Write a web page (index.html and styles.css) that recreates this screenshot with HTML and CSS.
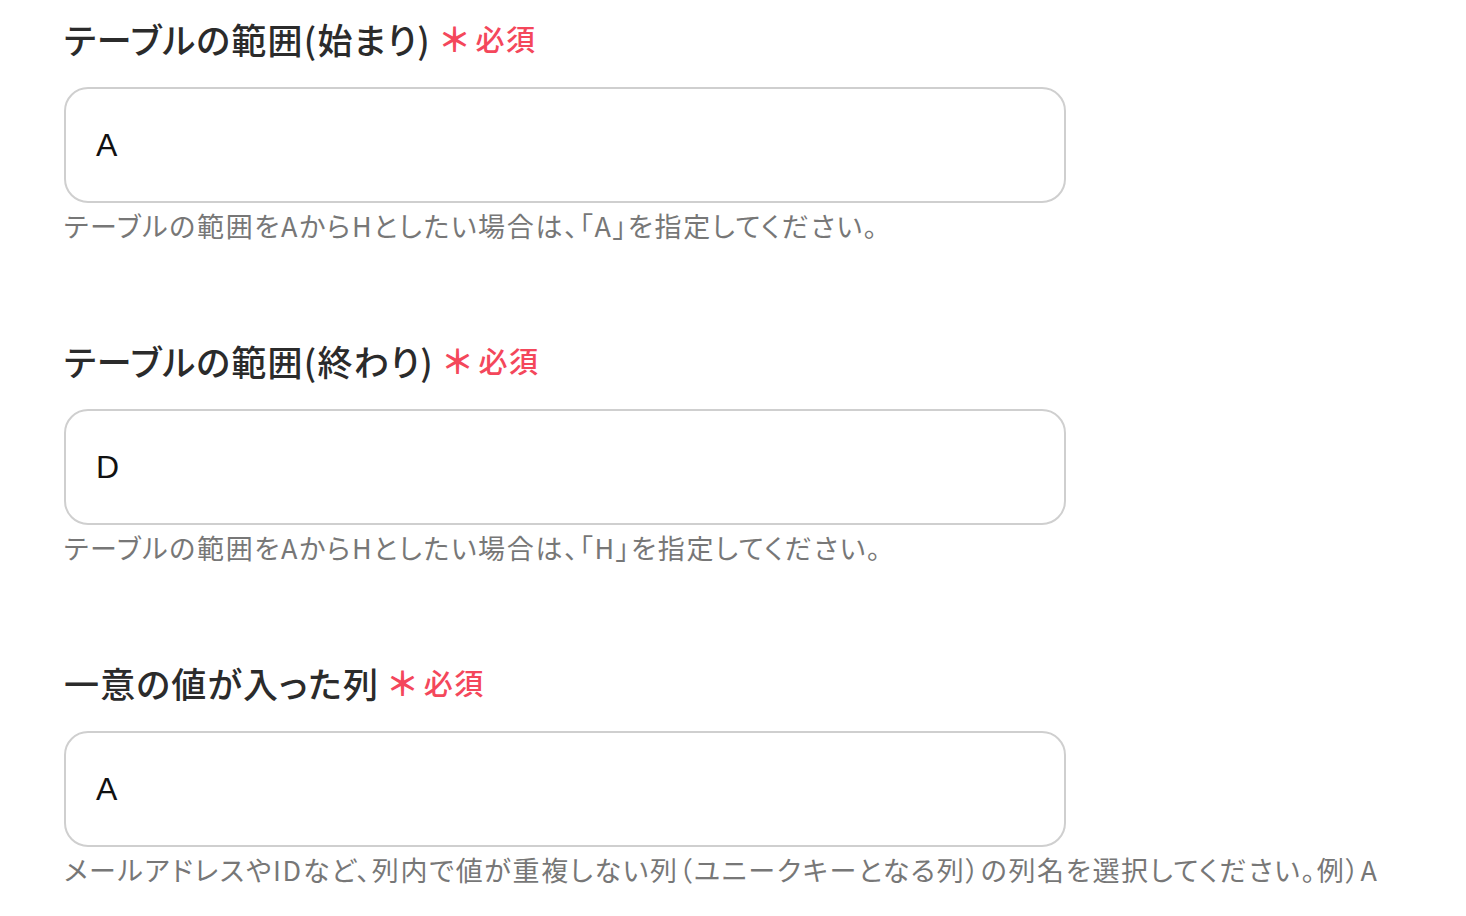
FILE: index.html
```html
<!DOCTYPE html>
<html lang="ja">
<head>
<meta charset="utf-8">
<link rel="stylesheet" href="styles.css">
</head>
<body>
<div class="form">
  <div class="field">
    <div class="label"><span class="label-text">テーブルの範囲(始まり)</span><span class="req"><span class="star">＊</span>必須</span></div>
    <div class="input">A</div>
    <div class="help">テーブルの範囲をAからHとしたい場合は、「A」を指定してください。</div>
  </div>
  <div class="field">
    <div class="label"><span class="label-text">テーブルの範囲(終わり)</span><span class="req"><span class="star">＊</span>必須</span></div>
    <div class="input">D</div>
    <div class="help">テーブルの範囲をAからHとしたい場合は、「H」を指定してください。</div>
  </div>
  <div class="field">
    <div class="label"><span class="label-text">一意の値が入った列</span><span class="req"><span class="star">＊</span>必須</span></div>
    <div class="input">A</div>
    <div class="help">メールアドレスやIDなど、列内で値が重複しない列（ユニークキーとなる列）の列名を選択してください。例）A</div>
  </div>
</div>
</body>
</html>
```
FILE: styles.css
```css
html, body {
  margin: 0;
  padding: 0;
  background: #fff;
}
body {
  font-family: "Noto Sans CJK JP", "Noto Sans", sans-serif;
  color: #333;
}
.form {
  padding: 13px 0 0 64px;
  width: 1002px;
  display: flex;
  flex-direction: column;
  gap: 91px;
}
.field {
  display: flex;
  flex-direction: column;
}
.label {
  display: flex;
  align-items: center;
  height: 50px;
  font-size: 35px;
  font-weight: 500;
  color: #2b2b2b;
  font-feature-settings: "palt";
  letter-spacing: 1.2px;
}
.req {
  margin-left: 10px;
  color: #f4475b;
  font-size: 29px;
  font-weight: 500;
  letter-spacing: 1.5px;
  display: flex;
  align-items: center;
}
.star {
  font-weight: 700;
  font-size: 33px;
  margin-right: 6px;
}
.input {
  margin-top: 24px;
  box-sizing: border-box;
  height: 116px;
  border: 2px solid #cfcfcf;
  border-radius: 24px;
  padding: 0 30px;
  display: flex;
  align-items: center;
  font-family: "Liberation Sans", Arial, sans-serif;
  font-size: 32px;
  color: #111;
}
.help {
  margin-top: 5px;
  font-size: 27px;
  line-height: 36px;
  color: #777;
  white-space: nowrap;
  font-feature-settings: "palt";
  letter-spacing: 1.7px;
}
```
